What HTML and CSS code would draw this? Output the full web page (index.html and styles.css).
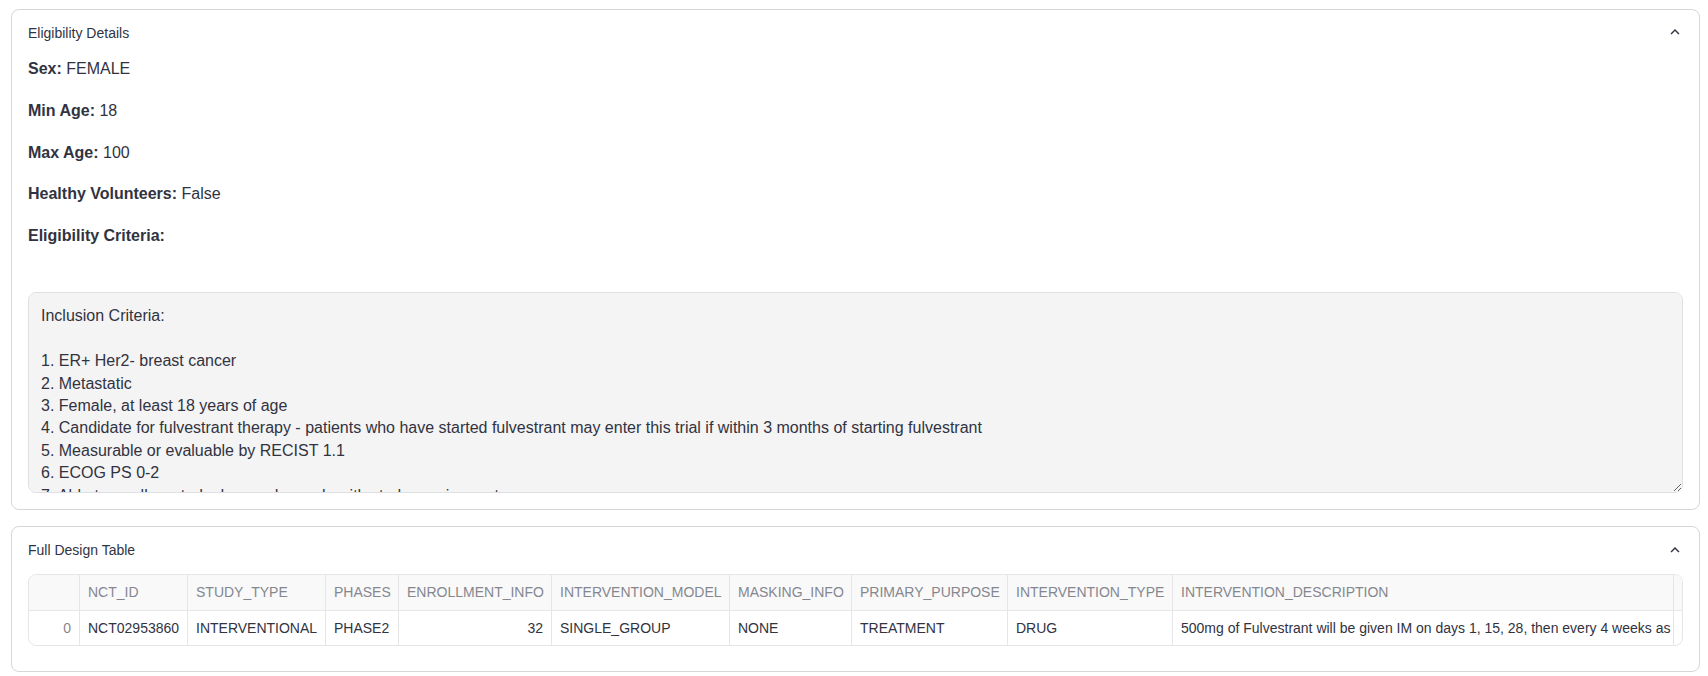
FILE: index.html
```html
<!DOCTYPE html>
<html lang="en">
<head>
<meta charset="utf-8">
<title>Trial details</title>
<link rel="stylesheet" href="styles.css">
</head>
<body>
<main class="page">
  <section class="expander">
    <header class="exp-head">
      <span class="exp-title">Eligibility Details</span>
      <svg class="chevron" viewBox="0 0 24 24" aria-hidden="true"><path d="M7.41 15.41 12 10.83l4.59 4.58L18 14l-6-6-6 6z"/></svg>
    </header>
    <div class="exp-body">
      <p class="field"><strong>Sex:</strong> FEMALE</p>
      <p class="field"><strong>Min Age:</strong> 18</p>
      <p class="field"><strong>Max Age:</strong> 100</p>
      <p class="field"><strong>Healthy Volunteers:</strong> False</p>
      <p class="field"><strong>Eligibility Criteria:</strong></p>
      <textarea class="criteria" readonly>Inclusion Criteria:

1. ER+ Her2- breast cancer
2. Metastatic
3. Female, at least 18 years of age
4. Candidate for fulvestrant therapy - patients who have started fulvestrant may enter this trial if within 3 months of starting fulvestrant
5. Measurable or evaluable by RECIST 1.1
6. ECOG PS 0-2
7. Able to swallow study drug and comply with study requirements
8. Adequate organ function

Exclusion Criteria:

1. Prior treatment with fulvestrant for more than 3 months
2. Active brain metastases</textarea>
    </div>
  </section>

  <section class="expander">
    <header class="exp-head">
      <span class="exp-title">Full Design Table</span>
      <svg class="chevron" viewBox="0 0 24 24" aria-hidden="true"><path d="M7.41 15.41 12 10.83l4.59 4.58L18 14l-6-6-6 6z"/></svg>
    </header>
    <div class="exp-body">
      <div class="grid-wrap">
        <div class="grid">
          <div class="cell head"></div>
          <div class="cell head">NCT_ID</div>
          <div class="cell head">STUDY_TYPE</div>
          <div class="cell head">PHASES</div>
          <div class="cell head">ENROLLMENT_INFO</div>
          <div class="cell head">INTERVENTION_MODEL</div>
          <div class="cell head">MASKING_INFO</div>
          <div class="cell head">PRIMARY_PURPOSE</div>
          <div class="cell head">INTERVENTION_TYPE</div>
          <div class="cell head">INTERVENTION_DESCRIPTION</div>
          <div class="cell head last">INTERVENTION_NAME</div>

          <div class="cell index num">0</div>
          <div class="cell">NCT02953860</div>
          <div class="cell">INTERVENTIONAL</div>
          <div class="cell">PHASE2</div>
          <div class="cell num">32</div>
          <div class="cell">SINGLE_GROUP</div>
          <div class="cell">NONE</div>
          <div class="cell">TREATMENT</div>
          <div class="cell">DRUG</div>
          <div class="cell">500mg of Fulvestrant will be given IM on days 1, 15, 28, then every 4 weeks as per standard of care</div>
          <div class="cell last">Fulvestrant</div>
        </div>
      </div>
    </div>
  </section>
</main>
</body>
</html>
```

FILE: styles.css
```css
* {
  box-sizing: border-box;
}

html, body {
  margin: 0;
  padding: 0;
  background: #ffffff;
}

body {
  font-family: "Liberation Sans", Arial, sans-serif;
  color: #31333f;
}

.page {
  padding: 9px 8px 0 11px;
  display: flex;
  flex-direction: column;
  gap: 16px;
}

.expander {
  border: 1px solid #d6d6d9;
  border-radius: 8px;
  background: #ffffff;
}

.exp-head {
  display: flex;
  align-items: center;
  justify-content: space-between;
  padding: 12px 16px;
  font-size: 14px;
  line-height: 22.4px;
}

.exp-title {
  color: #31333f;
}

.chevron {
  width: 18px;
  height: 18px;
  fill: #31333f;
  margin-right: -1px;
  margin-top: -2px;
}

.exp-body {
  padding: 0 16px 16px;
}

.field {
  margin: 0 0 16px;
  font-size: 16px;
  line-height: 25.6px;
}

.field strong {
  font-weight: 700;
}

.criteria {
  display: block;
  width: 100%;
  height: 201px;
  margin: 44px 0 0;
  padding: 12px 12px 11px;
  border: 1px solid #dfe0e4;
  border-radius: 8px;
  background: #f4f4f5;
  color: #31333f;
  font-family: "Liberation Sans", Arial, sans-serif;
  font-size: 16px;
  line-height: 22.4px;
  resize: vertical;
  overflow: auto;
  scrollbar-width: none;
  outline: none;
}

.criteria::-webkit-scrollbar {
  display: none;
}

.grid-wrap {
  border: 1px solid #e6e6e9;
  border-radius: 8px;
  overflow: hidden;
  margin-bottom: 9px;
}

.grid {
  display: grid;
  grid-template-columns: 51px 108px 138px 73px 153px 178px 122px 156px 165px 501px 160px;
  grid-template-rows: 36px 34px;
  font-size: 14px;
  width: max-content;
}

.cell {
  display: flex;
  align-items: center;
  padding: 0 8px;
  border-right: 1px solid #e6e6e9;
  white-space: nowrap;
  overflow: hidden;
  color: #31333f;
}

.cell.head {
  background: #f9f9fa;
  color: #85878f;
  border-bottom: 1px solid #e6e6e9;
}

.cell.num {
  justify-content: flex-end;
}

.cell.index {
  color: #85878f;
}

.cell.last {
  padding-left: 7px;
}
```
